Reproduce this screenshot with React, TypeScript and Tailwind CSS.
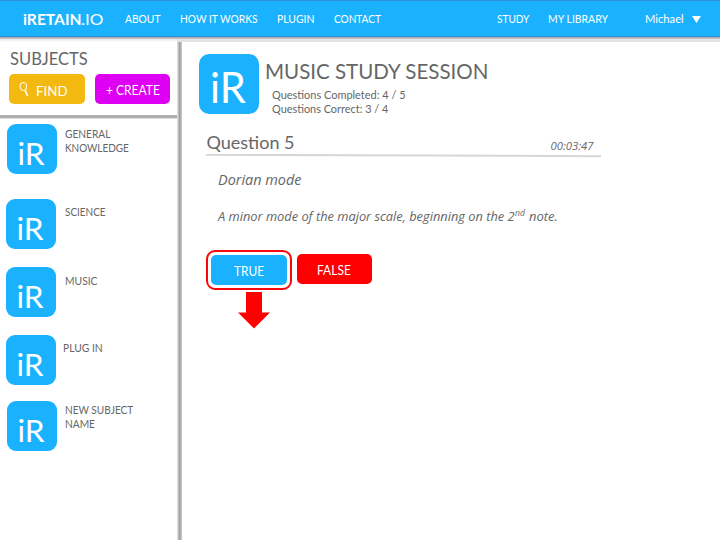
import React from "react";

function T({ box, fit = "", children }: { box: string; fit?: string; children: React.ReactNode }) {
  return (
    <div className={`shrink-0 whitespace-nowrap ${box}`}>
      <span className={`inline-block origin-left ${fit}`}>{children}</span>
    </div>
  );
}

function Tile({ large = false }: { large?: boolean }) {
  return large ? (
    <div className="h-[60px] w-[60px] shrink-0 rounded-[10px] bg-[#1ab2ff] pl-[11px] pt-[3px] text-white">
      <T box="h-[57px] w-[38px] text-[42px] leading-[60px]" fit="scale-x-[0.99]">iR</T>
    </div>
  ) : (
    <div className="h-[50px] w-[50px] shrink-0 rounded-[9px] bg-[#1ab2ff] pl-[10.5px] pt-[4px] text-white">
      <T box="h-[46px] w-[28px] text-[31.5px] leading-[50px]">iR</T>
    </div>
  );
}

function Subject({ row, gap, lines }: { row: string; gap: string; lines: { text: string; fit: string }[] }) {
  return (
    <div className={`flex ${row}`}>
      <Tile />
      <div className={gap}>
        {lines.map((l) => (
          <T key={l.text} box="h-[14px] w-[90px] text-[11.2px] leading-[14px]" fit={l.fit}>{l.text}</T>
        ))}
      </div>
    </div>
  );
}

export default function App() {
  return (
    <div className="flex h-[540px] w-[720px] flex-col overflow-hidden bg-white font-['Lato','Liberation_Sans',sans-serif] text-[#666666]">
      <header className="flex h-[37px] shrink-0 border-b border-t border-[#3390d8] bg-[#1ab2ff] pl-[23px] text-[11.2px] leading-[36px] text-white">
        <T box="w-[58px] text-[15.3px] font-bold" fit="scale-x-[1.02]">iRETAIN</T>
        <T box="w-[44px] text-[15.3px]" fit="scale-x-[1.11]">.IO</T>
        <T box="w-[54.5px]" fit="scale-x-[0.92]">ABOUT</T>
        <T box="w-[97px]" fit="scale-x-[0.915]">HOW IT WORKS</T>
        <T box="w-[57px]" fit="scale-x-[0.93]">PLUGIN</T>
        <T box="w-[163.5px]" fit="scale-x-[0.9]">CONTACT</T>
        <T box="w-[51px]" fit="scale-x-[0.9]">STUDY</T>
        <T box="w-[97px]" fit="scale-x-[0.935]">MY LIBRARY</T>
        <T box="w-[46.5px]" fit="scale-x-[1]">Michael</T>
        <svg className="mt-[15px] h-[7px] w-[9px]" viewBox="0 0 9 7"><path d="M0 0H9L4.5 7Z" fill="white" /></svg>
      </header>
      <div className="h-[2px] shrink-0 bg-linear-to-b from-[#a0a0a8] to-[#d0d0d0]" />
      <div className="flex h-[3px] shrink-0">
        <div className="w-[177px] bg-linear-to-b from-[#e8e8e8] to-white" />
        <div className="flex-1 bg-[#e3e3e3]" />
      </div>
      <div className="flex flex-1">
        <aside className="w-[177px] shrink-0">
          <div className="h-[73px] pl-[9px] pt-[7px]">
            <T box="h-[18px] pl-px text-[17.8px] leading-[18px]" fit="scale-x-[0.93]">SUBJECTS</T>
            <div className="mt-[7px] flex gap-[10px] text-white">
              <button className="flex h-[30px] w-[76px] rounded-[5px] bg-[#f3b911]">
                <svg className="ml-[10px] mt-[8px] h-[16px] w-[11px]" viewBox="0 0 11 16" fill="none" stroke="#fff7d8">
                  <ellipse cx="4.3" cy="4.5" rx="3.3" ry="4" strokeWidth="1.2" />
                  <path d="M6.2 8.3L8.6 14.2" strokeWidth="2" />
                </svg>
                <T box="ml-[6px] mt-[2px] text-[14px] leading-[30px]" fit="scale-x-[0.95]">FIND</T>
              </button>
              <button className="flex h-[30px] w-[75px] rounded-[5px] bg-[#dd00f3]">
                <T box="ml-[10.5px] mt-[2px] text-[12.4px] leading-[30px]" fit="scale-x-[0.97]">+ CREATE</T>
              </button>
            </div>
          </div>
          <div className="h-[4px] bg-linear-to-b from-[#bdbdbd] via-[#a0a0a0] to-[#eeeeee]" />
          <Subject row="mt-[5px] ml-[7px]" gap="ml-[7.5px] mt-[3px]" lines={[{ text: "GENERAL", fit: "scale-x-[0.91]" }, { text: "KNOWLEDGE", fit: "scale-x-[0.89]" }]} />
          <Subject row="mt-[25px] ml-[6px]" gap="ml-[8.5px] mt-[6px]" lines={[{ text: "SCIENCE", fit: "scale-x-[0.89]" }]} />
          <Subject row="mt-[18px] ml-[6px]" gap="ml-[8.5px] mt-[7px]" lines={[{ text: "MUSIC", fit: "scale-x-[0.92]" }]} />
          <Subject row="mt-[18px] ml-[6px]" gap="ml-[6.5px] mt-[6px]" lines={[{ text: "PLUG IN", fit: "scale-x-[0.92]" }]} />
          <Subject row="mt-[16px] ml-[7px]" gap="ml-[7.5px] mt-[2px]" lines={[{ text: "NEW SUBJECT", fit: "scale-x-[0.9]" }, { text: "NAME", fit: "scale-x-[0.91]" }]} />
        </aside>
        <div className="w-[5px] shrink-0 bg-linear-to-r from-[#eeeeee] via-[#a0a0a0] to-[#cccccc]" />
        <main className="pl-[17px] pt-[12px]">
          <div className="flex">
            <Tile large />
            <div className="ml-[6px] pt-[5px]">
              <T box="h-[24px] w-[240px] text-[21.6px] leading-[24px]" fit="scale-x-[0.95]">MUSIC STUDY SESSION</T>
              <div className="ml-[6.5px] mt-[5px] text-[11.3px] leading-[14px]">
                <T box="h-[14px]" fit="scale-x-[0.97]">Questions Completed: 4 / 5</T>
                <T box="h-[14px]" fit="scale-x-[0.965]">Questions Correct: 3 / 4</T>
              </div>
            </div>
          </div>
          <div className="ml-[7px] mt-[16px] flex h-[22px] w-[395px]">
            <T box="w-[344.5px] pl-[0.5px] text-[18px] leading-[20px]">Question 5</T>
            <T box="mt-[4px] font-['Open_Sans','Lato',sans-serif] text-[11.3px] italic leading-[20px]">00:03:47</T>
          </div>
          <svg className="ml-[7px] block h-[4px] w-[395px]" viewBox="0 0 395 4"><path d="M0 .7L395 2.2" stroke="#d6d6d6" strokeWidth="2" /></svg>
          <div className="ml-[19px] font-['Open_Sans','Lato',sans-serif] italic">
            <T box="mt-[12px] h-[20px] text-[14px] leading-[20px]" fit="scale-x-[1.03]">Dorian mode</T>
            <div className="mt-[16px] flex h-[20px] text-[12.7px] leading-[20px]">
              <T box="w-[297px]" fit="scale-x-[1.01]">A minor mode of the major scale, beginning on the 2</T>
              <T box="-mt-[3px] w-[14px] text-[8.5px]">nd</T>
              <T box="" fit="scale-x-[1.02]">note.</T>
            </div>
          </div>
          <div className="ml-[7px] mt-[23.5px] flex text-[12.5px] text-white">
            <div className="h-[40px] w-[86px] rounded-[9px] border-2 border-[#f80808] p-[3px]">
              <button className="flex h-[30px] w-[76px] rounded-[5px] bg-[#1ab2ff]">
                <T box="ml-[23px] mt-[2px] leading-[30px]" fit="scale-x-[0.95]">TRUE</T>
              </button>
            </div>
            <button className="ml-[5px] mt-[4.5px] flex h-[30px] w-[75px] rounded-[5px] bg-[#ff0000]">
              <T box="ml-[20px] mt-[2px] leading-[30px]" fit="scale-x-[0.96]">FALSE</T>
            </button>
          </div>
          <svg className="ml-[39px] mt-[2px] block h-[37px] w-[32px]" viewBox="0 0 32 37"><path d="M8 0H24V20.5H32L16 36.5L0 20.5H8Z" fill="#ff0000" /></svg>
        </main>
      </div>
    </div>
  );
}
